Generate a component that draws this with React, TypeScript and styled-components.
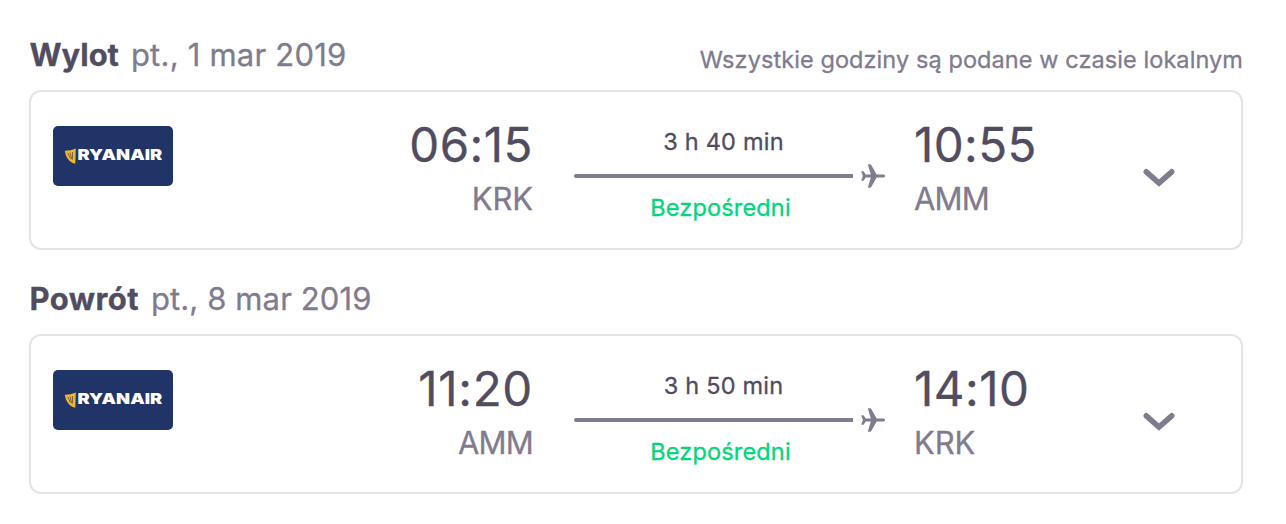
import React from 'react';
import styled, { createGlobalStyle } from 'styled-components';

const colors = {
  ink: '#524c61',
  muted: '#817b8f',
  line: '#e4e3e9',
  green: '#00d77b',
  navy: '#213468',
  gold: '#f2b52c',
};

const GlobalStyle = createGlobalStyle`
  *, *::before, *::after { box-sizing: border-box; }
  body {
    margin: 0;
    background: #fff;
    color: ${colors.ink};
    font-family: Inter, "Liberation Sans", sans-serif;
    font-weight: 400;
    -webkit-text-stroke: 0.3px currentColor;
  }
`;

const Page = styled.main`
  display: flex;
  flex-direction: column;
  gap: 29px;
  padding: 35px 43px 30px 29px;
`;

const Header = styled.header`
  display: flex;
  align-items: flex-start;
  height: 55px;
`;

const Title = styled.h2<{ $tracking: number }>`
  margin: 0 0 0 0.5px;
  font-size: 31px;
  font-weight: 700;
  line-height: 40px;
  letter-spacing: ${(p) => p.$tracking}px;
`;

const DateText = styled.span<{ $tracking: number }>`
  margin-left: 12px;
  color: ${colors.muted};
  font-size: 31px;
  line-height: 40px;
  letter-spacing: ${(p) => p.$tracking}px;
`;

const Note = styled.span`
  margin: 10px 0 0 auto;
  color: ${colors.muted};
  font-size: 23.5px;
  line-height: 30px;
  letter-spacing: 0.08px;
`;

const Card = styled.article`
  display: grid;
  grid-template-columns: 120px 360px 41px 311px 29px 229px 32px;
  align-items: start;
  height: 160px;
  padding: 25px 22px 0;
  border: 2px solid ${colors.line};
  border-radius: 12px;
`;

const Logo = styled.svg`
  display: block;
  width: 120px;
  height: 60px;
  margin-top: 9px;
  border-radius: 5px;
  background: ${colors.navy};
`;

const Stop = styled.div<{ $align: 'left' | 'right' }>`
  display: flex;
  grid-column: ${(p) => (p.$align === 'right' ? 2 : 6)};
  flex-direction: column;
  align-items: ${(p) => (p.$align === 'right' ? 'flex-end' : 'flex-start')};
`;

const Time = styled.time<{ $tracking: number }>`
  font-size: 47.5px;
  line-height: 56px;
  letter-spacing: ${(p) => p.$tracking}px;
`;

const Code = styled.span<{ $tracking: number }>`
  margin-top: 6px;
  color: ${colors.muted};
  font-size: 31px;
  line-height: 40px;
  letter-spacing: ${(p) => p.$tracking}px;
`;

const Route = styled.div`
  display: flex;
  grid-column: 4;
  flex-direction: column;
  padding-top: 10px;
`;

const Duration = styled.span`
  width: 299px;
  font-size: 23.5px;
  line-height: 30px;
  letter-spacing: 0.22px;
  text-align: center;
`;

const Track = styled.div`
  display: flex;
  align-items: center;
  gap: 8px;
  height: 26px;
  margin: 6px 0 4px;
`;

const Line = styled.span`
  width: 279px;
  height: 4px;
  border-radius: 2px 0 0 2px;
  background: ${colors.muted};
`;

const Direct = styled.span`
  width: 293px;
  color: ${colors.green};
  font-size: 23.5px;
  line-height: 30px;
  letter-spacing: 0.16px;
  text-align: center;
`;

const Toggle = styled.button`
  display: flex;
  grid-column: 7;
  width: 32px;
  height: 20px;
  margin: 51px 0 0;
  padding: 0;
  border: 0;
  background: none;
  cursor: pointer;
`;

function RyanairLogo() {
  return (
    <Logo viewBox="0 0 120 60" role="img" aria-label="Ryanair">
      <path d="M11.8 24.8 Q17 25 22.8 22.6 L22.3 37.8 L19.6 37 Q13 33.8 11.8 24.8Z" fill={colors.gold} />
      <path d="M14.8 26.8 L17.4 32.6 M17.2 26.6 L18.6 33 M19.6 26 L19.4 33.6" fill="none" stroke={colors.navy} strokeWidth="0.6" />
      <text x="24.4" y="34.4" fill="#fff" fontFamily="Inter, sans-serif" fontSize="15" fontWeight="900" textLength="84.8" lengthAdjust="spacingAndGlyphs">
        RYANAIR
      </text>
    </Logo>
  );
}

function Plane() {
  return (
    <svg width="24" height="24" viewBox="0 0 24 24" fill={colors.muted} aria-hidden="true">
      <path d="M22.6 10.6H15.6L10.4 1.2Q9.9 0.3 9 0.3H7.5Q6.8 0.3 7 1L9.8 10.6H4.8L2.9 7.8Q2.6 7.3 2.1 7.3H0.8Q0.2 7.3 0.4 7.9L1.9 12L0.4 16.1Q0.2 16.7 0.8 16.7H2.1Q2.6 16.7 2.9 16.2L4.8 13.4H9.8L7 23Q6.8 23.7 7.5 23.7H9Q9.9 23.7 10.4 22.8L15.6 13.4H22.6Q24 13.2 24 12T22.6 10.6Z" />
    </svg>
  );
}

function Chevron() {
  return (
    <svg width="32" height="20" viewBox="0 0 32 20" aria-hidden="true">
      <path d="M3.3 3.8L16 15L28.7 3.8" fill="none" stroke={colors.muted} strokeWidth="5.6" strokeLinecap="round" />
    </svg>
  );
}

interface StopInfo {
  time: string;
  code: string;
  tracking: number;
}

interface Leg {
  title: string;
  titleTracking: number;
  date: string;
  dateTracking: number;
  note?: string;
  from: StopInfo;
  to: StopInfo;
  duration: string;
}

const codeTracking: Record<string, number> = { KRK: -0.1, AMM: -0.8 };

const legs: Leg[] = [
  {
    title: 'Wylot',
    titleTracking: -0.05,
    date: 'pt., 1 mar 2019',
    dateTracking: 0.22,
    note: 'Wszystkie godziny są podane w czasie lokalnym',
    from: { time: '06:15', code: 'KRK', tracking: 0.5 },
    to: { time: '10:55', code: 'AMM', tracking: 0.4 },
    duration: '3 h 40 min',
  },
  {
    title: 'Powrót',
    titleTracking: 0.4,
    date: 'pt., 8 mar 2019',
    dateTracking: 0.12,
    from: { time: '11:20', code: 'AMM', tracking: 0.7 },
    to: { time: '14:10', code: 'KRK', tracking: 0.5 },
    duration: '3 h 50 min',
  },
];

export default function App() {
  return (
    <>
      <GlobalStyle />
      <Page>
        {legs.map((leg) => (
          <section key={leg.title}>
            <Header>
              <Title $tracking={leg.titleTracking}>{leg.title}</Title>
              <DateText $tracking={leg.dateTracking}>{leg.date}</DateText>
              {leg.note && <Note>{leg.note}</Note>}
            </Header>
            <Card>
              <RyanairLogo />
              <Stop $align="right">
                <Time $tracking={leg.from.tracking}>{leg.from.time}</Time>
                <Code $tracking={codeTracking[leg.from.code]}>{leg.from.code}</Code>
              </Stop>
              <Route>
                <Duration>{leg.duration}</Duration>
                <Track>
                  <Line />
                  <Plane />
                </Track>
                <Direct>Bezpośredni</Direct>
              </Route>
              <Stop $align="left">
                <Time $tracking={leg.to.tracking}>{leg.to.time}</Time>
                <Code $tracking={codeTracking[leg.to.code]}>{leg.to.code}</Code>
              </Stop>
              <Toggle aria-label="Szczegóły">
                <Chevron />
              </Toggle>
            </Card>
          </section>
        ))}
      </Page>
    </>
  );
}
